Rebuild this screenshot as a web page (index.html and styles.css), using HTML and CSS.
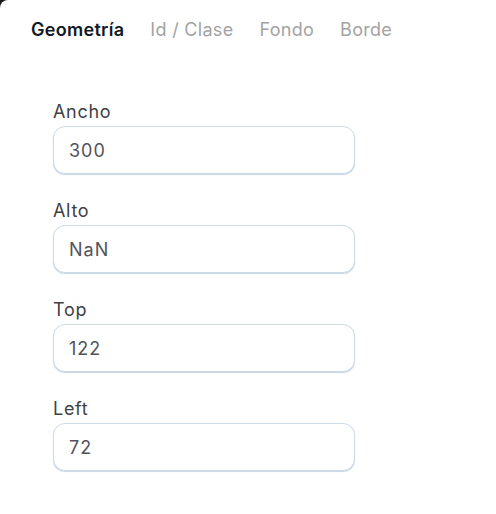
FILE: index.html
```html
<!DOCTYPE html>
<html lang="es">
<head>
<meta charset="utf-8">
<title>Propiedades</title>
<link rel="stylesheet" href="styles.css">
</head>
<body>
<div class="panel">
  <nav class="tabs">
    <span class="tab active">Geometría</span>
    <span class="tab">Id / Clase</span>
    <span class="tab">Fondo</span>
    <span class="tab">Borde</span>
  </nav>
  <form class="form">
    <label class="field">
      <span class="label">Ancho</span>
      <input class="input" type="text" value="300">
    </label>
    <label class="field">
      <span class="label">Alto</span>
      <input class="input" type="text" value="NaN">
    </label>
    <label class="field">
      <span class="label">Top</span>
      <input class="input" type="text" value="122">
    </label>
    <label class="field">
      <span class="label">Left</span>
      <input class="input" type="text" value="72">
    </label>
  </form>
</div>
</body>
</html>
```
FILE: styles.css
```css
html {
  background: #1a1a1a;
  height: 100%;
}
body {
  margin: 0;
  min-height: 100%;
  background: #ffffff;
  border-top-left-radius: 8px;
  font-family: Inter, "Noto Sans", sans-serif;
}
.panel {
  padding: 19px 0 0 31px;
}
.tabs {
  display: flex;
  gap: 26px;
  font-size: 18px;
  line-height: 22px;
  letter-spacing: 0.3px;
}
.tab {
  color: #a3a3a3;
  font-weight: 400;
}
.tab.active {
  color: #111827;
  font-weight: 600;
}
.form {
  display: flex;
  flex-direction: column;
  gap: 26px;
  padding: 60px 0 0 22px;
}
.field {
  display: flex;
  flex-direction: column;
  gap: 3px;
}
.label {
  font-size: 18px;
  line-height: 22px;
  letter-spacing: 0.7px;
  color: #3f3f46;
}
.input {
  box-sizing: border-box;
  width: 302px;
  height: 48px;
  margin: 0;
  padding: 0 15px;
  border: 1px solid #ccdae8;
  border-radius: 12px;
  box-shadow: 0 1px 1px rgba(160, 185, 210, 0.6);
  font-family: inherit;
  font-size: 18px;
  letter-spacing: 1px;
  color: #52525b;
  background: #ffffff;
  outline: none;
}
```
